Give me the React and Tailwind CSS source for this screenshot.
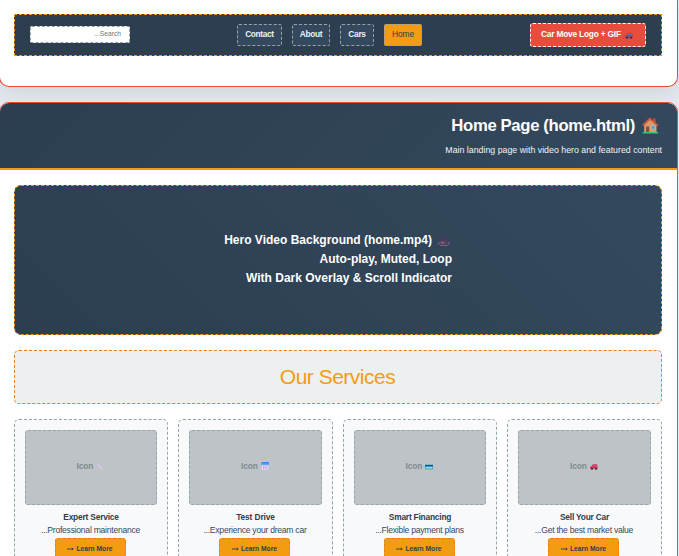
import React from "react";

const navItems = [
  { label: "Contact", width: "w-[45px]", tracking: "tracking-[-0.35px]" },
  { label: "About", width: "w-[38px]", tracking: "tracking-[-0.3px]" },
  { label: "Cars", width: "w-[34px]", tracking: "tracking-[-0.3px]" },
];

function CarIcon({ className, body }) {
  return (
    <svg viewBox="0 0 8 6" className={className}>
      <path d="M0 4.8V2.8L1.6 2.3 2.8.3H7.2L7.8 4.8Z" fill={body} />
      <path d="M3.2 1H4.7V2.3H2.5ZM5.3 1H6.7L7 2.3H5.3Z" fill="#5b86c4" />
      <circle cx="2" cy="4.8" r="1.1" fill="#34335f" />
      <circle cx="6" cy="4.8" r="1.1" fill="#34335f" />
    </svg>
  );
}

function HouseIcon() {
  return (
    <svg viewBox="0 0 17 17" className="h-[17px] w-[17px]">
      <path d="M11 1.5H13.6V6H11Z" fill="#a9583f" />
      <path d="M2.2 8 8 2.5 14.5 8V15.5H2.2Z" fill="#d99b6c" />
      <path d="M.8 8.4 7.8 1.6 15.8 8.7" fill="none" stroke="#d9553b" strokeWidth="1.7" />
      <path d="M4 9.5H7.2V15.5H4Z" fill="#85503d" />
      <path d="M9.3 8.6H13V12.2H9.3Z" fill="#37a5e8" stroke="#f0c9a0" strokeWidth=".5" />
      <path d="M.6 15H16.2V16.4H.6Z" fill="#36c47a" />
    </svg>
  );
}

function CameraIcon() {
  return (
    <svg viewBox="0 0 12 11" className="mt-[2px] h-[11px] w-3">
      <circle cx="3.2" cy="2.6" r="1.9" fill="#493b5c" />
      <circle cx="8.2" cy="2.6" r="1.9" fill="#493b5c" />
      <path d="M2 4.6H9.6V10H2Z" fill="#55415f" />
      <path d="M0 6H1.6V9H0ZM10 6.2 11.6 5.2V9.6L10 8.8Z" fill="#6a5379" />
      <path d="M3 6H6V7.2H3Z" fill="#8b7397" />
      <path d="M2 9H9.6V10H2Z" fill="#7c6189" />
    </svg>
  );
}

function WrenchIcon() {
  return (
    <svg viewBox="0 0 8 8" className="h-2 w-2">
      <path d="M.8 1 7 6.8" stroke="#d8c9e6" strokeWidth="1.4" />
      <path d="M.2 2.2 2.2.2" stroke="#c7bad4" strokeWidth=".7" />
    </svg>
  );
}

function CalendarIcon() {
  return (
    <svg viewBox="0 0 8 8" className="-mt-px h-2 w-2">
      <path d="M.8 2H7.4V8H.8Z" fill="#e4dcf2" />
      <path d="M.8 0H8V1.5H.8Z" fill="#288bf0" />
      <path d="M0 1.2H8V2.8H0Z" fill="#3f9cf4" />
      <path d="M2.5 3V7.5M4.2 3V7.5M5.9 3V7.5" stroke="#a593cc" strokeWidth=".6" />
    </svg>
  );
}

function CreditCardIcon() {
  return (
    <svg viewBox="0 0 8 6" className="mt-px h-[6px] w-2">
      <path d="M0 .5H8V5.5H0Z" fill="#45a4dc" />
      <path d="M0 1H8V2.2H0Z" fill="#34495e" />
      <path d="M1 3H7V4.5H1Z" fill="#b4cbd8" />
    </svg>
  );
}

const services = [
  { title: "Expert Service", text: "...Professional maintenance", icon: <WrenchIcon />, width: "w-[154px]", titleTracking: "tracking-[-0.18px]" },
  { title: "Test Drive", text: "...Experience your dream car", icon: <CalendarIcon />, width: "w-[155px]", titleTracking: "tracking-[-0.1px]" },
  { title: "Smart Financing", text: "...Flexible payment plans", icon: <CreditCardIcon />, width: "w-[154px]", titleTracking: "tracking-[-0.2px]" },
  { title: "Sell Your Car", text: "...Get the best market value", icon: <CarIcon className="mt-px h-[6px] w-2" body="#e2354f" />, width: "w-[155px]", titleTracking: "tracking-[-0.2px]" },
];

function ServiceCard({ service }) {
  return (
    <article className={`${service.width} flex h-[160px] shrink-0 flex-col items-center rounded-[5px] border border-dashed border-[#95a5a6] bg-[#f8f9fa] p-[10px]`}>
      <div className="flex h-[75px] w-full shrink-0 items-center justify-center gap-[3px] rounded-[3px] border border-dashed border-[#95a5a6] bg-[#bdc3c7] pr-px pb-[2px] text-[8.35px] font-bold text-[#7f8c8d]">
        <span className="tracking-[-0.1px]">Icon</span>
        {service.icon}
      </div>
      <h3 className={`${service.titleTracking} mt-[6px] h-[13px] whitespace-nowrap text-[8.35px] leading-[13px] font-bold text-[#2c3e50]`}>{service.title}</h3>
      <p className="-mt-px h-[15px] whitespace-nowrap pr-px text-[8.6px] leading-[14px] tracking-[-0.26px] text-[#34495e]">{service.text}</p>
      <button className="mr-[2px] flex h-[22px] w-[71px] shrink-0 items-center justify-center gap-[2px] whitespace-nowrap rounded-[3px] border border-dashed border-[#e67e22] bg-[#f39c12] text-[6.7px] font-bold text-[#2c3e50]">
        <svg viewBox="0 0 7 4" className="h-1 w-[7px]">
          <path d="M0 2H6M4.8.9 6.2 2 4.8 3.1" fill="none" stroke="currentColor" strokeWidth=".9" />
        </svg>
        Learn More
      </button>
    </article>
  );
}

export default function App() {
  return (
    <div className="h-[556px] w-[679px] overflow-hidden bg-[#e4e8ef] font-['Liberation_Sans',Arial,sans-serif]">
      <section className="-ml-px h-[87px] w-[679px] rounded-b-[10px] border border-t-0 border-[#e74c3c] bg-white px-[14px] pt-[14px] shadow-[0_7px_20px_rgba(0,0,0,0.08)]">
        <nav className="flex h-[42px] w-[648px] items-center justify-between border border-dashed border-[#f39c12] bg-[#2c3e50] px-[15px]">
          <div className="mb-[2px] flex h-[17px] w-[100px] items-center justify-end rounded-[2px] border border-dashed border-[#95a5a6] bg-white pr-2 text-[6.7px] text-[#757575]">
            ...Search
          </div>
          <div className="mr-px flex gap-[10px]">
            {navItems.map((item) => (
              <a key={item.label} className={`${item.width} ${item.tracking} flex h-[22px] items-center justify-center rounded-[2px] border border-dashed border-[#95a5a6] bg-[#34495e] pb-px text-[8.35px] font-bold text-[#ecf0f1]`}>
                {item.label}
              </a>
            ))}
            <a className="flex h-[22px] w-[38px] items-center justify-center rounded-[2px] border border-dashed border-[#95a5a6] bg-[#f39c12] pb-px text-[8.35px] tracking-[-0.1px] text-[#2c3e50]">Home</a>
          </div>
          <div className="flex h-6 w-[116px] items-center gap-[4px] whitespace-nowrap rounded-[3px] border border-dashed border-white bg-[#e74c3c] pb-px pl-[10px] text-[8.35px] font-bold tracking-[-0.2px] text-white">
            Car Move Logo + GIF
            <CarIcon className="mt-[2px] h-[6px] w-2" body="#81496e" />
          </div>
        </nav>
      </section>

      <main className="-ml-px mt-[15px] h-[600px] w-[679px] overflow-hidden rounded-t-[10px] border border-[#e74c3c] bg-white">
        <header className="flex h-[67px] flex-col items-end border-b-2 border-[#f39c12] bg-linear-135 from-[#2c3e50] to-[#34495e] pr-[15px] text-white">
          <h1 className="mt-[11px] flex h-[22px] items-center whitespace-nowrap pr-[3px] text-[16.7px] leading-[22px] font-bold">
            <span className="mr-[7px] pt-px tracking-[-0.35px]">Home Page (home.html)</span>
            <HouseIcon />
          </h1>
          <p className="mt-[7px] whitespace-nowrap text-[8.8px] leading-[14px] text-[#f1f3f5]">Main landing page with video hero and featured content</p>
        </header>

        <div className="px-[14px] pt-[15px]">
          <section className="flex h-[150px] w-[648px] items-center justify-center rounded-[7px] border border-dashed border-[#f39c12] bg-linear-45 from-[#2c3e50] to-[#34495e] pb-[2px] text-white">
            <div className="flex w-[228px] flex-col items-end whitespace-nowrap text-[12px] leading-[19px] font-bold">
              <div className="flex items-center gap-[6px] pr-[2px]">
                Hero Video Background (home.mp4)
                <CameraIcon />
              </div>
              <div>Auto-play, Muted, Loop</div>
              <div>With Dark Overlay &amp; Scroll Indicator</div>
            </div>
          </section>

          <h2 className="mt-[15px] flex h-[54px] w-[648px] items-center justify-center rounded-[5px] border border-dashed border-[#e67e22] bg-[#ecf0f1] pr-px text-[21px] tracking-[-0.5px] text-[#f39c12]">Our Services</h2>

          <div className="mt-[15px] flex w-[648px] gap-[10px]">
            {services.map((service) => (
              <ServiceCard key={service.title} service={service} />
            ))}
          </div>
        </div>
      </main>
    </div>
  );
}
